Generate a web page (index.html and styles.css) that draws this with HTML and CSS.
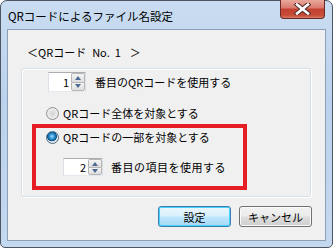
FILE: index.html
```html
<html>
<head>
<meta charset="utf-8">
<link rel="stylesheet" href="styles.css">
</head>
<body>

<div class="win">
    <!-- title bar -->
    <div class="titlebar">
        <span class="title">QRコードによるファイル名設定</span>
        <span class="close">
            <svg width="17" height="12" viewBox="0 0 17 12">
                <path d="M3 1.5 L14 10.5 M14 1.5 L3 10.5" stroke="#4a2a28" stroke-width="4.6" stroke-linecap="square"/>
                <path d="M3 1.5 L14 10.5 M14 1.5 L3 10.5" stroke="#ffffff" stroke-width="2.6" stroke-linecap="square"/>
            </svg>
        </span>
    </div>

    <!-- client area -->
    <div class="client">
        <div class="nav"><span class="navprev">＜</span><span class="navname">QRコード</span><span class="navno">No.&nbsp;&nbsp;1</span><span class="navnext">＞</span></div>

        <div class="group">
            <div class="row row1">
                <div class="spin"><span class="val">1</span><span class="arrows"><i class="up"></i><i class="dn"></i></span></div>
                <label class="lbl">番目のQRコードを使用する</label>
            </div>

            <div class="row radiorow r1">
                <span class="radio"></span><label class="lbl">QRコード全体を対象とする</label>
            </div>

            <div class="mark">
                <div class="row radiorow r2">
                    <span class="radio on"></span><label class="lbl">QRコードの一部を対象とする</label>
                </div>
                <div class="row row2">
                    <div class="spin small"><span class="val">2</span><span class="arrows"><i class="up"></i><i class="dn"></i></span></div>
                    <label class="lbl wide">番目の項目を使用する</label>
                </div>
            </div>
        </div>

        <div class="btns">
            <button class="btn def">設定</button>
            <button class="btn">キャンセル</button>
        </div>
    </div>
</div>

</body>
</html>
```

FILE: styles.css
```css
html, body {
    margin: 0;
    padding: 0;
    background: #ffffff;
}
body {
    font-family: "Noto Sans CJK JP", "Noto Sans", sans-serif;
    font-size: 11px;
    color: #000000;
}
.win {
    width: 333px;
    height: 248px;
    box-sizing: border-box;
    border: 1px solid #4b5662;
    border-radius: 7px 7px 5px 5px;
    padding: 0 6px 6px 6px;
    background: linear-gradient(to bottom, #c9dcf1 0%, #bcd2ec 40%, #c4d8ef 100%);
}
.titlebar {
    height: 28px;
    display: flex;
    justify-content: space-between;
    align-items: flex-start;
}
.title {
    padding-left: 1px;
    margin-top: 7px;
    line-height: 16px;
    font-size: 11.5px;
}
.close {
    width: 43px;
    height: 18px;
    margin-top: -1px;
    margin-right: 1px;
    border: 1px solid #6a2a26;
    border-top: none;
    border-radius: 0 0 4px 4px;
    background: linear-gradient(to bottom, #e9a99c 0%, #d9786b 45%, #c2402f 50%, #c84c38 85%, #d87a62 100%);
    display: flex;
    align-items: center;
    justify-content: center;
}
.close svg {
    display: block;
}
.client {
    width: 317px;
    height: 210px;
    border: 1px solid #8a9fb8;
    background: #f0f0f0;
}
.nav {
    padding-top: 14px;
    padding-left: 19px;
    height: 16px;
    line-height: 16px;
    display: flex;
}
.navprev {
    width: 10px;
    overflow: hidden;
}
.navname {
    margin-left: 1px;
}
.navno {
    margin-left: 6px;
}
.navnext {
    margin-left: 9px;
}
.group {
    margin-top: 8px;
    margin-left: 13px;
    width: 290px;
    height: 129px;
    box-sizing: border-box;
    border: 1px solid #d5dfe5;
    box-shadow: inset 1px 1px 0 #ffffff, 1px 1px 0 #ffffff;
    border-radius: 3px;
}
.row {
    display: flex;
    align-items: center;
}
.row1 {
    margin-top: 3px;
    height: 20px;
    padding-left: 26px;
}
.row1 .lbl {
    margin-left: 9px;
}
.radiorow {
    height: 16px;
}
.r1 {
    margin-top: 13px;
    padding-left: 24px;
}
.r2 {
    margin-top: 1px;
    padding-left: 10px;
}
.radiorow .lbl {
    margin-left: 4px;
}
.lbl {
    line-height: 16px;
    white-space: nowrap;
}
.wide {
    letter-spacing: 0.5px;
}
.mark {
    margin-top: 3px;
    margin-left: 10px;
    width: 215px;
    height: 66px;
    box-sizing: border-box;
    border: 4px solid #e51d25;
}
.row2 {
    margin-top: 13px;
    height: 18px;
    padding-left: 27px;
}
.row2 .lbl {
    margin-left: 8px;
}
.radio {
    width: 13px;
    height: 13px;
    box-sizing: border-box;
    border-radius: 50%;
    border: 1px solid #8e8f8f;
    background: radial-gradient(circle at 50% 50%, #d2d2d2 0%, #e6e6e6 45%, #f8f8f8 100%);
    flex-shrink: 0;
}
.radio.on {
    border-color: #4d6b84;
    background: radial-gradient(circle at 45% 40%, #9edcff 0%, #2b8fd0 30%, #0d4f84 52%, #dfe6ec 58%, #f4f4f4 100%);
}
.spin {
    width: 38px;
    height: 20px;
    box-sizing: border-box;
    border: 1px solid #abadb3;
    border-left-color: #dbdfe6;
    border-right-color: #dbdfe6;
    border-bottom-color: #e3e9ef;
    background: #ffffff;
    display: flex;
    justify-content: flex-end;
}
.spin.small {
    width: 40px;
    height: 18px;
}
.val {
    line-height: 18px;
    padding-right: 2px;
}
.spin.small .val {
    line-height: 16px;
}
.arrows {
    width: 14px;
    display: flex;
    flex-direction: column;
}
.arrows i {
    flex: 1;
    position: relative;
    border: 1px solid #b5b5b5;
    background: linear-gradient(to bottom, #f4f4f4, #dedede);
}
.arrows i.up {
    border-bottom: none;
    border-radius: 2px 2px 0 0;
}
.arrows i.dn {
    border-radius: 0 0 2px 2px;
}
.arrows i.up::after,
.arrows i.dn::after {
    content: "";
    position: absolute;
    left: 3px;
    top: 2px;
    border-left: 3px solid transparent;
    border-right: 3px solid transparent;
}
.arrows i.up::after {
    border-bottom: 4px solid #4c6a92;
}
.arrows i.dn::after {
    top: 1px;
    border-top: 4px solid #4c6a92;
}
.btns {
    margin-top: 9px;
    padding-left: 150px;
    display: flex;
    gap: 8px;
}
.btn {
    width: 73px;
    height: 21px;
    box-sizing: border-box;
    border: 1px solid #707070;
    border-radius: 3px;
    background: linear-gradient(to bottom, #f2f2f2 0%, #ebebeb 48%, #dddddd 52%, #cfcfcf 100%);
    box-shadow: inset 0 0 0 1px #fbfbfb;
    font-family: "Noto Sans CJK JP", sans-serif;
    font-size: 11px;
    line-height: 16px;
    padding: 0;
    color: #000000;
}
.btn.def {
    border-color: #3c7fb1;
    box-shadow: inset 0 0 0 1px #48d1ff;
    background: linear-gradient(to bottom, #eaf6fd 0%, #d9f0fc 48%, #bee6fd 52%, #a7d9f5 100%);
}
```
